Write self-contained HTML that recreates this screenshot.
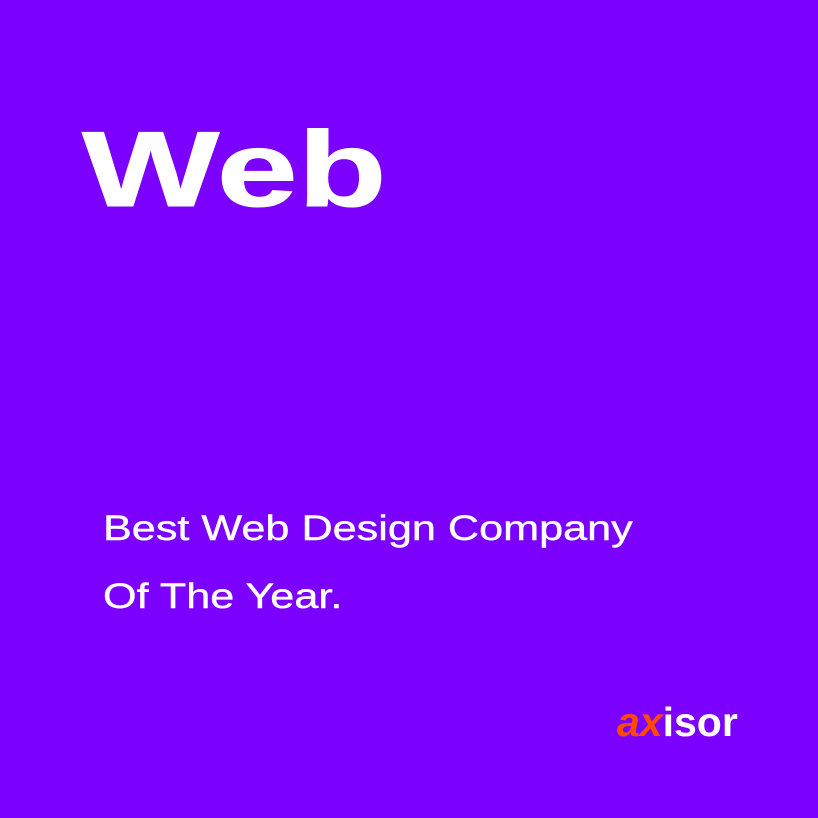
<!DOCTYPE html>
<html><head><style>
html,body{margin:0;padding:0}
body{width:818px;height:818px;overflow:hidden;position:relative;background:#7b00fe;font-family:"Liberation Sans",sans-serif;color:#fff}
.t{position:absolute;line-height:1;white-space:nowrap;transform-origin:0 0}
</style></head><body>
<div class="t" style="left:82px;top:116px;font-size:107px;font-weight:bold;transform:scaleX(1.36);-webkit-text-stroke:1px #fff">Web</div>
<div class="t" style="left:103px;top:511px;font-size:35px;transform:scaleX(1.234);-webkit-text-stroke:0.4px #fff">Best Web Design Company</div>
<div class="t" style="left:103px;top:579px;font-size:35px;transform:scaleX(1.234);-webkit-text-stroke:0.4px #fff">Of The Year.</div>
<div class="t" style="left:617px;top:702px;font-size:41px;font-weight:bold"><span style="color:#ff4a00;font-style:italic">ax</span>isor</div>
</body></html>
